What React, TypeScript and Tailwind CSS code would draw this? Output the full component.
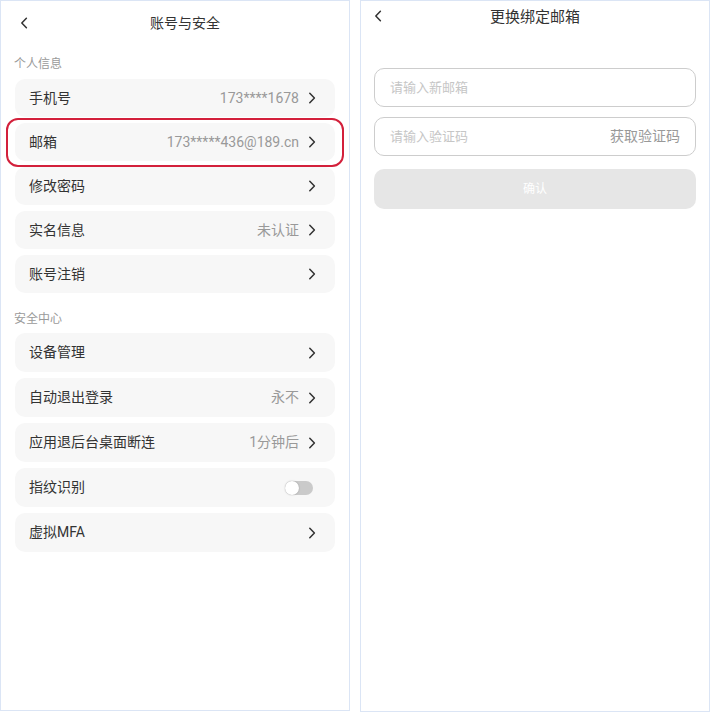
import React from "react";

const Chevron = ({ className = "" }: { className?: string }) => (
  <svg width="8" height="12" viewBox="0 0 8 12" className={className} fill="none">
    <path d="M1.8 1.2 L6.4 6 L1.8 10.8" stroke="#333" strokeWidth="1.5" strokeLinecap="round" strokeLinejoin="round" />
  </svg>
);

const Back = () => (
  <svg width="8" height="12" viewBox="0 0 8 12" fill="none">
    <path d="M6.4 1.2 L1.8 6 L6.4 10.8" stroke="#333" strokeWidth="1.5" strokeLinecap="round" strokeLinejoin="round" />
  </svg>
);

type Row = { label: string; value?: string; toggle?: boolean; highlight?: boolean };

const group1: Row[] = [
  { label: "手机号", value: "173****1678" },
  { label: "邮箱", value: "173*****436@189.cn", highlight: true },
  { label: "修改密码" },
  { label: "实名信息", value: "未认证" },
  { label: "账号注销" },
];

const group2: Row[] = [
  { label: "设备管理" },
  { label: "自动退出登录", value: "永不" },
  { label: "应用退后台桌面断连", value: "1分钟后" },
  { label: "指纹识别", toggle: true },
  { label: "虚拟MFA" },
];

const Card = ({ row, h }: { row: Row; h: string }) => (
  <div className={`relative ${h} mx-[14px] rounded-[10px] bg-[#f7f7f7] flex items-center pl-[14px] ${row.toggle ? "pr-[22px]" : "pr-[19px]"}`}>
    {row.highlight && (
      <div className="absolute left-[-9px] right-[-9px] top-[-5px] bottom-[-6px] rounded-[12px] border-2 border-[#d3203b]" />
    )}
    <span className="flex-1 text-[14px] leading-[18px] text-[#333] -mt-[1px]">{row.label}</span>
    {row.toggle ? (
      <div className="relative w-[28px] h-[14px] rounded-full bg-[#cacaca]">
        <div className="absolute left-0 top-0 w-[14px] h-[14px] rounded-full bg-white shadow-[0_0_1.5px_rgba(0,0,0,0.3)]" />
      </div>
    ) : (
      <>
        {row.value && <span className="text-[14px] leading-[18px] text-[#999] mr-[9px] -mt-[1px]">{row.value}</span>}
        <Chevron />
      </>
    )}
  </div>
);

export default function App() {
  return (
    <div
      className="w-[710px] h-[712px] flex bg-white"
      style={{ fontFamily: 'Roboto, "Noto Sans CJK SC", sans-serif' }}
    >
      <div className="w-[350px] h-[711px] border border-[#dbe5f5] flex flex-col">
        <div className="h-[43px] flex items-center pl-[19px] pr-[7px]">
          <Back />
          <div className="flex-1 text-center text-[14px] leading-[18px] text-[#333]">账号与安全</div>
        </div>
        <div className="mt-[12px] mb-[7px] pl-[13px] text-[12px] leading-[16px] text-[#9a9a9a]">个人信息</div>
        <div className="flex flex-col gap-[6px]">
          {group1.map((r) => (
            <Card key={r.label} row={r} h="h-[38px]" />
          ))}
        </div>
        <div className="mt-[18px] mb-[6px] pl-[13px] text-[12px] leading-[16px] text-[#9a9a9a]">安全中心</div>
        <div className="flex flex-col gap-[6px]">
          {group2.map((r) => (
            <Card key={r.label} row={r} h="h-[39px]" />
          ))}
        </div>
      </div>

      <div className="ml-[10px] w-[350px] h-[712px] border border-[#dbe5f5] flex flex-col">
        <div className="h-[32px] grid grid-cols-[40px_1fr_40px] items-center">
          <div className="pl-[13px] -mt-[2px]">
            <Back />
          </div>
          <div className="text-center text-[15px] leading-[18px] text-[#333]">更换绑定邮箱</div>
          <div />
        </div>
        <div className="mt-[35px] mx-[13px] flex flex-col">
          <div className="h-[39px] rounded-[10px] border border-[#cdcdcd] flex items-center px-[15px]">
            <span className="text-[13px] text-[#c6c6c6]">请输入新邮箱</span>
          </div>
          <div className="mt-[10px] h-[39px] rounded-[10px] border border-[#cdcdcd] flex items-center px-[15px]">
            <span className="flex-1 text-[13px] text-[#c6c6c6]">请输入验证码</span>
            <span className="text-[14px] text-[#999]">获取验证码</span>
          </div>
          <div className="mt-[13px] h-[40px] rounded-[10px] bg-[#e6e6e6] flex items-center justify-center">
            <span className="text-[12px] text-white">确认</span>
          </div>
        </div>
      </div>
    </div>
  );
}
